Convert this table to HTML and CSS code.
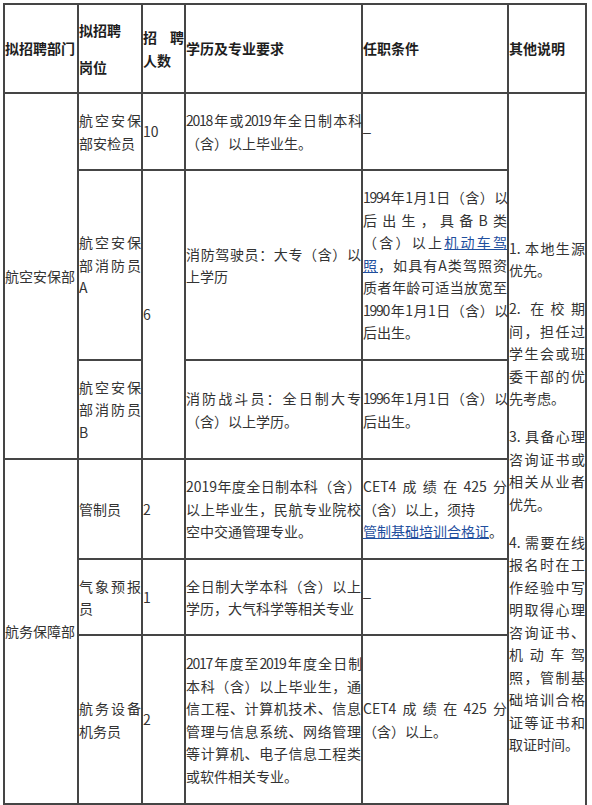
FILE: index.html
```html
<!DOCTYPE html>
<html lang="zh-CN">
<head>
<meta charset="utf-8">
<title>招聘岗位表</title>
<link rel="stylesheet" href="styles.css">
</head>
<body>
<div class="page">
<table class="jobs">
  <colgroup>
    <col class="c-dept">
    <col class="c-post">
    <col class="c-num">
    <col class="c-edu">
    <col class="c-cond">
    <col class="c-note">
  </colgroup>
  <thead>
    <tr class="row-head">
      <th>拟招聘部门</th>
      <th class="head-post"><p>拟招聘</p><p>岗位</p></th>
      <th class="head-num"><span class="ln jl">招聘</span><span class="ln">人数</span></th>
      <th>学历及专业要求</th>
      <th>任职条件</th>
      <th>其他说明</th>
    </tr>
  </thead>
  <tbody>
    <tr class="row-1">
      <td rowspan="3">航空安保部</td>
      <td><span class="ln jl">航空安保</span><span class="ln">部安检员</span></td>
      <td>10</td>
      <td><span class="ln jl tight">2018年或2019年全日制本科</span><span class="ln">（含）以上毕业生。</span></td>
      <td><span class="dash">–</span></td>
      <td rowspan="7" class="notes">
        <p><span class="ln jl">1. 本地生源</span><span class="ln">优先。</span></p>
        <p><span class="ln jl">2. 在校期</span><span class="ln jl">间，担任过</span><span class="ln jl">学生会或班</span><span class="ln jl">委干部的优</span><span class="ln">先考虑。</span></p>
        <p><span class="ln jl">3. 具备心理</span><span class="ln jl">咨询证书或</span><span class="ln jl">相关从业者</span><span class="ln">优先。</span></p>
        <p><span class="ln jl">4. 需要在线</span><span class="ln jl">报名时在工</span><span class="ln jl">作经验中写</span><span class="ln jl">明取得心理</span><span class="ln jl">咨询证书、</span><span class="ln jl">机动车驾</span><span class="ln jl">照，管制基</span><span class="ln jl">础培训合格</span><span class="ln jl">证等证书和</span><span class="ln">取证时间。</span></p>
      </td>
    </tr>
    <tr class="row-2">
      <td><span class="ln jl">航空安保</span><span class="ln jl">部消防员</span><span class="ln">A</span></td>
      <td rowspan="2">6</td>
      <td><span class="ln jl">消防驾驶员：大专（含）以</span><span class="ln">上学历</span></td>
      <td>
        <span class="ln jl tight">1994年1月1日（含）以</span>
        <span class="ln jl">后出生，具备B类</span>
        <span class="ln jl">（含）以上<a href="#">机动车驾</a></span>
        <span class="ln jl"><a href="#">照</a>，如具有A类驾照资</span>
        <span class="ln jl">质者年龄可适当放宽至</span>
        <span class="ln jl tight">1990年1月1日（含）以</span>
        <span class="ln">后出生。</span>
      </td>
    </tr>
    <tr class="row-3">
      <td><span class="ln jl">航空安保</span><span class="ln jl">部消防员</span><span class="ln">B</span></td>
      <td><span class="ln jl">消防战斗员：全日制大专</span><span class="ln">（含）以上学历。</span></td>
      <td><span class="ln jl tight">1996年1月1日（含）以</span><span class="ln">后出生。</span></td>
    </tr>
    <tr class="row-4">
      <td rowspan="3">航务保障部</td>
      <td>管制员</td>
      <td>2</td>
      <td><span class="ln jl">2019年度全日制本科（含）</span><span class="ln jl">以上毕业生，民航专业院校</span><span class="ln">空中交通管理专业。</span></td>
      <td><span class="ln jl">CET4成绩在425分</span><span class="ln">（含）以上，须持</span><span class="ln"><a href="#">管制基础培训合格证</a>。</span></td>
    </tr>
    <tr class="row-5">
      <td><span class="ln jl">气象预报</span><span class="ln">员</span></td>
      <td>1</td>
      <td><span class="ln jl">全日制大学本科（含）以上</span><span class="ln">学历，大气科学等相关专业</span></td>
      <td><span class="dash">–</span></td>
    </tr>
    <tr class="row-6">
      <td><span class="ln jl">航务设备</span><span class="ln">机务员</span></td>
      <td>2</td>
      <td>
        <span class="ln jl tight">2017年度至2019年度全日制</span>
        <span class="ln jl">本科（含）以上毕业生，通</span>
        <span class="ln jl">信工程、计算机技术、信息</span>
        <span class="ln jl">管理与信息系统、网络管理</span>
        <span class="ln jl">等计算机、电子信息工程类</span>
        <span class="ln">或软件相关专业。</span>
      </td>
      <td><span class="ln jl">CET4成绩在425分</span><span class="ln">（含）以上。</span></td>
    </tr>
    <tr class="row-7">
      <td></td>
      <td></td>
      <td></td>
      <td></td>
      <td></td>
    </tr>
  </tbody>
</table>
</div>
</body>
</html>
```

FILE: styles.css
```css
html, body {
  margin: 0;
  padding: 0;
  background: #ffffff;
}

body {
  font-family: "Noto Sans CJK SC", "Noto Sans", sans-serif;
  font-size: 14px;
  color: #333333;
}

.page {
  padding: 3px 0 0 3px;
}

.jobs {
  border-collapse: collapse;
  table-layout: fixed;
  width: 584px;
}

.c-dept { width: 74px; }
.c-post { width: 64px; }
.c-num  { width: 43px; }
.c-edu  { width: 177px; }
.c-cond { width: 146px; }
.c-note { width: 78px; }

.jobs th,
.jobs td {
  border: 2px solid #454545;
  padding: 0;
  vertical-align: middle;
  text-align: left;
  line-height: 22.5px;
}

.jobs th {
  font-weight: bold;
  color: #1e1e1e;
}

.jobs p {
  margin: 0;
}

.row-head { height: 89px; }
.row-1 { height: 77px; }
.row-2 { height: 190px; }
.row-3 { height: 99px; }
.row-4 { height: 100px; }
.row-5 { height: 76px; }
.row-6 { height: 169px; }
.row-7 { height: 95px; }

.head-post p + p {
  margin-top: 15px;
}

.head-num {
  line-height: 25px;
}

.ln {
  display: block;
  white-space: nowrap;
}

.jl {
  text-align: justify;
  text-align-last: justify;
}

.tight {
  letter-spacing: -1.3px;
}

.dash {
  font-family: "Liberation Sans", sans-serif;
}

.jobs a {
  color: #1f4f9e;
  text-decoration: underline;
}

.notes p + p {
  margin-top: 15.5px;
}
```
